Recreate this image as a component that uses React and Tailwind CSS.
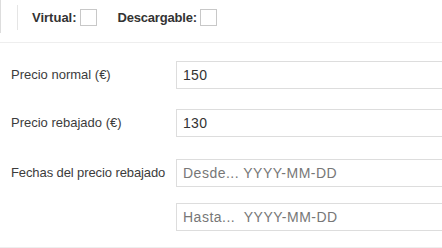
export default function App() {
  const font = { fontFamily: '"Liberation Sans", Arial, sans-serif' }
  return (
    <div className="w-[442px] h-[248px] bg-white overflow-hidden text-[#3c3c3c]" style={font}>
      {/* Opciones del producto */}
      <div className="h-[43px] border-b border-[#eee] flex items-start">
        <div className="h-[33px] border-l border-[#ddd] pl-[16px] pt-[5px]">
          <div className="h-[25px] border-l border-[#e5e5e5] flex items-center pl-[14px] gap-[3px]">
            <label className="text-[13px] font-bold text-[#333]">Virtual:</label>
            <span className="w-[17px] h-[17px] border border-[#c8c8c8] bg-white"></span>
            <label className="text-[13px] font-bold text-[#333] ml-[18px] tracking-[-0.2px]">Descargable:</label>
            <span className="w-[17px] h-[17px] border border-[#c8c8c8] bg-white"></span>
          </div>
        </div>
      </div>

      {/* Precios */}
      <div className="pt-[18px] border-b border-[#eee] h-[205px]">
        <div className="flex items-center h-[28px]">
          <span className="w-[176px] pl-[11px] text-[13px]">Precio normal (€)</span>
          <div className="flex-1 h-[28px] border border-[#ddd] border-r-0 px-[6px] flex items-center text-[14px] text-[#333] tracking-[0.3px]">150</div>
        </div>
        <div className="flex items-center h-[28px] mt-[20px]">
          <span className="w-[176px] pl-[11px] text-[13px]">Precio rebajado (€)</span>
          <div className="flex-1 h-[28px] border border-[#ddd] border-r-0 px-[6px] flex items-center text-[14px] text-[#333] tracking-[0.3px]">130</div>
        </div>
        <div className="flex items-center h-[28px] mt-[22px]">
          <span className="w-[176px] pl-[11px] text-[13px] tracking-[-0.1px]">Fechas del precio rebajado</span>
          <div className="flex-1 h-[28px] border border-[#ddd] border-r-0 px-[6px] flex items-center text-[14px] text-[#777] tracking-[0.5px]">Desde... YYYY-MM-DD</div>
        </div>
        <div className="flex items-center h-[28px] mt-[16px]">
          <span className="w-[176px]"></span>
          <div className="flex-1 h-[28px] border border-[#ddd] border-r-0 px-[6px] flex items-center text-[14px] text-[#777] tracking-[0.5px]">Hasta...&nbsp; YYYY-MM-DD</div>
        </div>
      </div>
    </div>
  )
}
